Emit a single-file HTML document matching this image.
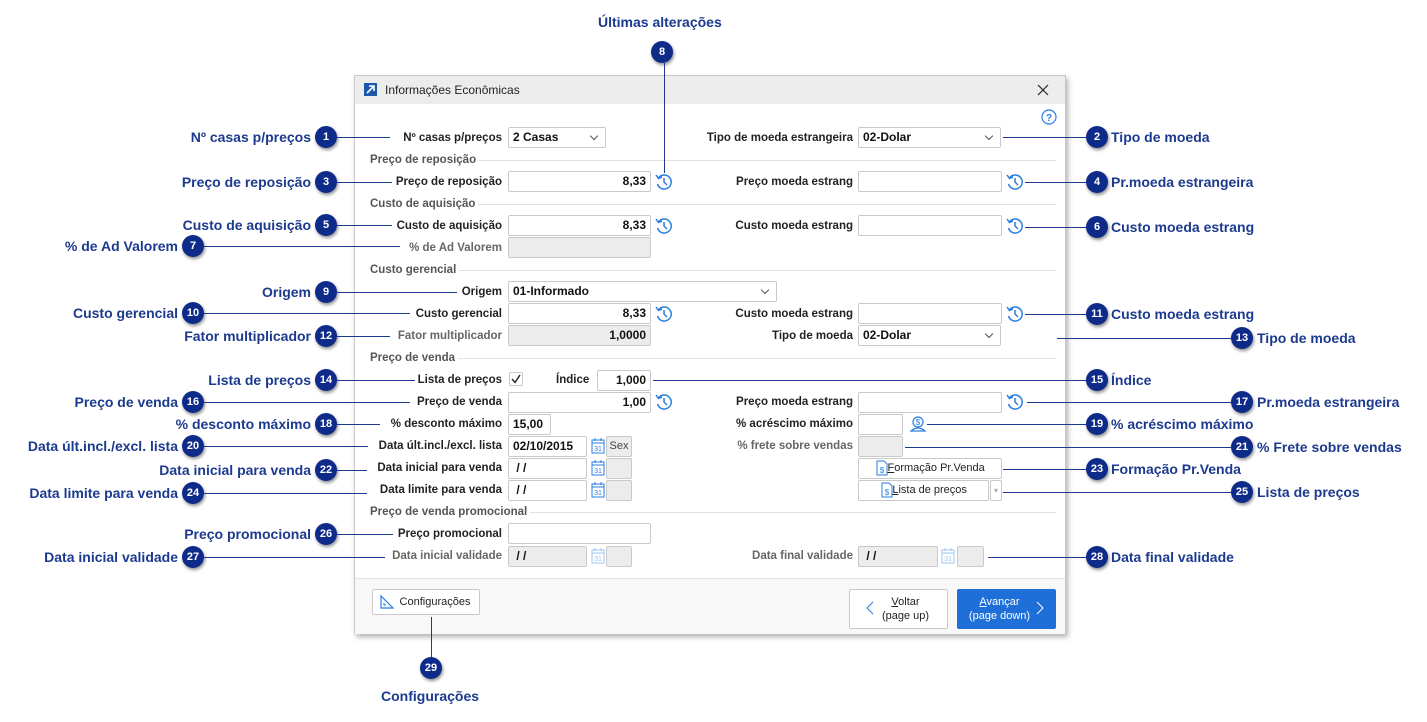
<!DOCTYPE html>
<html><head><meta charset="utf-8"><style>
*{box-sizing:border-box;margin:0;padding:0}
body{width:1427px;height:722px;background:#fff;position:relative;overflow:hidden;font-family:"Liberation Sans",sans-serif}
.a{position:absolute}
.cl{position:absolute;font-weight:bold;font-size:14px;color:#1c3a8e;white-space:nowrap;line-height:18px}
.b{position:absolute;width:22px;height:22px;border-radius:50%;background:#0f2b8a;color:#fff;font-size:11px;font-weight:bold;text-align:center;line-height:22px;box-shadow:1px 2px 3px rgba(0,0,0,.45)}
.h{position:absolute;height:1px;background:#1c3a8e}
.v{position:absolute;width:1px;background:#1c3a8e}
.dlg{position:absolute;left:354px;top:75px;width:712px;height:559px;background:#fff;border:1px solid #c8c8c8;box-shadow:2px 3px 5px rgba(0,0,0,.3)}
.lb{position:absolute;font-size:11.5px;font-weight:bold;color:#222;white-space:nowrap;line-height:14px;text-align:right}
.gr{color:#666}
.in{position:absolute;height:21px;border:1px solid #c9c9c9;border-radius:2px;background:#fff;font-size:12px;font-weight:bold;color:#111;line-height:19px;padding:0 4px;text-align:right}
.dis{background:#ececec}
.sel{text-align:left}
.sel:after{content:"";position:absolute;right:8px;top:5px;width:5px;height:5px;border-right:1px solid #555;border-bottom:1px solid #555;transform:rotate(45deg)}
.sec{position:absolute;left:16px;right:10px;font-size:11.5px;color:#444;line-height:14px;font-weight:bold}
.sec span{background:#fff;padding-right:3px;position:relative;z-index:1;color:#555}
.sec:before{content:"";position:absolute;left:0;right:0;top:7px;height:1px;background:#e2e2e2}
.btn{position:absolute;border:1px solid #c9c9c9;border-radius:2px;background:#fff;font-size:11px;color:#222;text-align:center}
</style></head><body>

<div class="dlg">
 <div class="a" style="left:0;top:0;width:710px;height:28px;background:#ececec"></div>
 <div class="a" style="left:9px;top:7px;width:13px;height:13px;background:#1c57a8"></div>
 <svg class="a" style="left:9px;top:7px" width="13" height="13"><path d="M3 10 L10 3 M5 3 H10 V8" stroke="#fff" stroke-width="1.6" fill="none"/></svg>
 <div class="a" style="left:30px;top:7px;font-size:12px;color:#222">Informações Econômicas</div>
 <svg class="a" style="left:682px;top:8px" width="12" height="12"><path d="M1 1 L11 11 M11 1 L1 11" stroke="#222" stroke-width="1.2"/></svg>
 <svg class="a" style="left:686px;top:33px" width="16" height="16"><circle cx="8" cy="8" r="7" stroke="#2a7de1" stroke-width="1.2" fill="none"/><text x="8" y="12" font-size="10" fill="#2a7de1" text-anchor="middle" font-family="Liberation Sans" font-weight="bold">?</text></svg>
 <div class="a" style="left:0;top:502px;width:710px;height:56px;background:#f8f8f8;border-top:1px solid #e2e2e2"></div>
</div>

<div class="lb" style="right:925px;top:131px">Nº casas p/preços</div>
<div class="in sel" style="left:508px;top:127px;width:98px">2 Casas</div>
<div class="lb" style="right:574px;top:131px">Tipo de moeda estrangeira</div>
<div class="in sel" style="left:858px;top:127px;width:143px">02-Dolar</div>

<div class="sec" style="left:370px;width:686px;top:153px"><span>Preço de reposição</span></div>
<div class="lb" style="right:925px;top:175px">Preço de reposição</div>
<div class="in" style="left:508px;top:171px;width:143px">8,33</div>
<div class="lb" style="right:574px;top:175px">Preço moeda estrang</div>
<div class="in" style="left:858px;top:171px;width:144px"></div>

<div class="sec" style="left:370px;width:686px;top:197px"><span>Custo de aquisição</span></div>
<div class="lb" style="right:925px;top:219px">Custo de aquisição</div>
<div class="in" style="left:508px;top:215px;width:143px">8,33</div>
<div class="lb" style="right:574px;top:219px">Custo moeda estrang</div>
<div class="in" style="left:858px;top:215px;width:144px"></div>
<div class="lb gr" style="right:925px;top:241px">% de Ad Valorem</div>
<div class="in dis" style="left:508px;top:237px;width:143px"></div>

<div class="sec" style="left:370px;width:686px;top:263px"><span>Custo gerencial</span></div>
<div class="lb" style="right:925px;top:285px">Origem</div>
<div class="in sel" style="left:508px;top:281px;width:269px">01-Informado</div>
<div class="lb" style="right:925px;top:307px">Custo gerencial</div>
<div class="in" style="left:508px;top:303px;width:143px">8,33</div>
<div class="lb" style="right:574px;top:307px">Custo moeda estrang</div>
<div class="in" style="left:858px;top:303px;width:144px"></div>
<div class="lb gr" style="right:925px;top:329px">Fator multiplicador</div>
<div class="in dis" style="left:508px;top:325px;width:143px">1,0000</div>
<div class="lb" style="right:574px;top:329px">Tipo de moeda</div>
<div class="in sel" style="left:858px;top:325px;width:143px">02-Dolar</div>

<div class="sec" style="left:370px;width:686px;top:351px"><span>Preço de venda</span></div>
<div class="lb" style="right:925px;top:373px">Lista de preços</div>
<div class="in" style="left:509px;top:372px;width:14px;height:14px;padding:0"></div>
<svg class="a" style="left:510px;top:373px" width="12" height="12"><path d="M2 6 L5 9.5 L10 2" stroke="#222" stroke-width="1.4" fill="none"/></svg>
<div class="lb" style="left:556px;top:373px">Índice</div>
<div class="in" style="left:597px;top:370px;width:54px">1,000</div>
<div class="lb" style="right:925px;top:395px">Preço de venda</div>
<div class="in" style="left:508px;top:392px;width:143px">1,00</div>
<div class="lb" style="right:574px;top:395px">Preço moeda estrang</div>
<div class="in" style="left:858px;top:392px;width:144px"></div>
<div class="lb" style="right:925px;top:417px">% desconto máximo</div>
<div class="in" style="left:508px;top:414px;width:43px;text-align:left">15,00</div>
<div class="lb" style="right:574px;top:417px">% acréscimo máximo</div>
<div class="in" style="left:858px;top:414px;width:45px"></div>
<svg class="a" style="left:908px;top:414px" width="20" height="20"><circle cx="10" cy="8" r="5" stroke="#2a7de1" fill="none" stroke-width="1.2"/><text x="10" y="11" font-size="8" fill="#2a7de1" text-anchor="middle" font-family="Liberation Sans">$</text><path d="M3 17 Q10 11 17 17 Z" stroke="#2a7de1" fill="none" stroke-width="1.2"/></svg>
<div class="lb" style="right:925px;top:439px">Data últ.incl./excl. lista</div>
<div class="in" style="left:508px;top:436px;width:79px;text-align:left">02/10/2015</div>
<div class="in dis" style="left:606px;top:436px;width:26px;font-weight:normal;color:#444;padding:0;text-align:center;font-size:11px">Sex</div>
<div class="lb gr" style="right:574px;top:439px">% frete sobre vendas</div>
<div class="in dis" style="left:858px;top:436px;width:45px"></div>
<div class="lb" style="right:925px;top:461px">Data inicial para venda</div>
<div class="in" style="left:508px;top:458px;width:79px;text-align:left">&nbsp;/ /</div>
<div class="in dis" style="left:606px;top:458px;width:26px"></div>
<div class="btn" style="left:858px;top:458px;width:144px;height:21px;line-height:19px">&nbsp;&nbsp;&nbsp;&nbsp;<u>F</u>ormação Pr.Venda</div>
<div class="lb" style="right:925px;top:483px">Data limite para venda</div>
<div class="in" style="left:508px;top:480px;width:79px;text-align:left">&nbsp;/ /</div>
<div class="in dis" style="left:606px;top:480px;width:26px"></div>
<div class="btn" style="left:858px;top:480px;width:131px;height:21px;line-height:19px">&nbsp;&nbsp;&nbsp;&nbsp;<u>L</u>ista de preços</div>
<div class="btn" style="left:990px;top:480px;width:12px;height:21px;line-height:19px;color:#aaa;font-size:8px">▾</div>
<svg class="a" style="left:876px;top:460px" width="12" height="16"><path d="M1 1 H8 L11 4 V15 H1 Z" stroke="#2a7de1" fill="none"/><text x="6" y="13" font-size="8" fill="#2a7de1" text-anchor="middle">$</text></svg>
<svg class="a" style="left:881px;top:482px" width="12" height="16"><path d="M1 1 H8 L11 4 V15 H1 Z" stroke="#2a7de1" fill="none"/><text x="6" y="13" font-size="8" fill="#2a7de1" text-anchor="middle">$</text></svg>

<div class="sec" style="left:370px;width:686px;top:505px"><span>Preço de venda promocional</span></div>
<div class="lb" style="right:925px;top:527px">Preço promocional</div>
<div class="in" style="left:508px;top:523px;width:143px"></div>
<div class="lb gr" style="right:925px;top:549px">Data inicial validade</div>
<div class="in dis" style="left:508px;top:546px;width:79px;text-align:left">&nbsp;/ /</div>
<div class="in dis" style="left:606px;top:546px;width:26px"></div>
<div class="lb gr" style="right:574px;top:549px">Data final validade</div>
<div class="in dis" style="left:858px;top:546px;width:80px;text-align:left">&nbsp;/ /</div>
<div class="in dis" style="left:957px;top:546px;width:27px"></div>

<svg class="a" style="left:591px;top:437px" width="14" height="17"><rect x="1" y="3" width="12" height="13" stroke="#2a7de1" fill="none"/><path d="M1 6 H13 M4 1 V4 M10 1 V4" stroke="#2a7de1"/><text x="7" y="14" font-size="7" fill="#2a7de1" text-anchor="middle">31</text></svg>
<svg class="a" style="left:591px;top:459px" width="14" height="17"><rect x="1" y="3" width="12" height="13" stroke="#2a7de1" fill="none"/><path d="M1 6 H13 M4 1 V4 M10 1 V4" stroke="#2a7de1"/><text x="7" y="14" font-size="7" fill="#2a7de1" text-anchor="middle">31</text></svg>
<svg class="a" style="left:591px;top:481px" width="14" height="17"><rect x="1" y="3" width="12" height="13" stroke="#2a7de1" fill="none"/><path d="M1 6 H13 M4 1 V4 M10 1 V4" stroke="#2a7de1"/><text x="7" y="14" font-size="7" fill="#2a7de1" text-anchor="middle">31</text></svg>
<svg class="a" style="left:591px;top:547px" width="14" height="17" opacity=".45"><rect x="1" y="3" width="12" height="13" stroke="#2a7de1" fill="none"/><path d="M1 6 H13 M4 1 V4 M10 1 V4" stroke="#2a7de1"/><text x="7" y="14" font-size="7" fill="#2a7de1" text-anchor="middle">31</text></svg>
<svg class="a" style="left:941px;top:547px" width="14" height="17" opacity=".45"><rect x="1" y="3" width="12" height="13" stroke="#2a7de1" fill="none"/><path d="M1 6 H13 M4 1 V4 M10 1 V4" stroke="#2a7de1"/><text x="7" y="14" font-size="7" fill="#2a7de1" text-anchor="middle">31</text></svg>

<svg class="a" style="left:655px;top:173px" width="18" height="18"><path d="M3.5 5 A7 7 0 1 1 2.5 11" stroke="#2a7de1" stroke-width="1.5" fill="none"/><path d="M1 2 L3.5 5.5 L7 4" stroke="#2a7de1" stroke-width="1.5" fill="none"/><path d="M9 5 V9 L12 12" stroke="#2a7de1" stroke-width="1.5" fill="none"/></svg>
<svg class="a" style="left:655px;top:217px" width="18" height="18"><path d="M3.5 5 A7 7 0 1 1 2.5 11" stroke="#2a7de1" stroke-width="1.5" fill="none"/><path d="M1 2 L3.5 5.5 L7 4" stroke="#2a7de1" stroke-width="1.5" fill="none"/><path d="M9 5 V9 L12 12" stroke="#2a7de1" stroke-width="1.5" fill="none"/></svg>
<svg class="a" style="left:655px;top:305px" width="18" height="18"><path d="M3.5 5 A7 7 0 1 1 2.5 11" stroke="#2a7de1" stroke-width="1.5" fill="none"/><path d="M1 2 L3.5 5.5 L7 4" stroke="#2a7de1" stroke-width="1.5" fill="none"/><path d="M9 5 V9 L12 12" stroke="#2a7de1" stroke-width="1.5" fill="none"/></svg>
<svg class="a" style="left:655px;top:393px" width="18" height="18"><path d="M3.5 5 A7 7 0 1 1 2.5 11" stroke="#2a7de1" stroke-width="1.5" fill="none"/><path d="M1 2 L3.5 5.5 L7 4" stroke="#2a7de1" stroke-width="1.5" fill="none"/><path d="M9 5 V9 L12 12" stroke="#2a7de1" stroke-width="1.5" fill="none"/></svg>
<svg class="a" style="left:1006px;top:173px" width="18" height="18"><path d="M3.5 5 A7 7 0 1 1 2.5 11" stroke="#2a7de1" stroke-width="1.5" fill="none"/><path d="M1 2 L3.5 5.5 L7 4" stroke="#2a7de1" stroke-width="1.5" fill="none"/><path d="M9 5 V9 L12 12" stroke="#2a7de1" stroke-width="1.5" fill="none"/></svg>
<svg class="a" style="left:1006px;top:217px" width="18" height="18"><path d="M3.5 5 A7 7 0 1 1 2.5 11" stroke="#2a7de1" stroke-width="1.5" fill="none"/><path d="M1 2 L3.5 5.5 L7 4" stroke="#2a7de1" stroke-width="1.5" fill="none"/><path d="M9 5 V9 L12 12" stroke="#2a7de1" stroke-width="1.5" fill="none"/></svg>
<svg class="a" style="left:1006px;top:305px" width="18" height="18"><path d="M3.5 5 A7 7 0 1 1 2.5 11" stroke="#2a7de1" stroke-width="1.5" fill="none"/><path d="M1 2 L3.5 5.5 L7 4" stroke="#2a7de1" stroke-width="1.5" fill="none"/><path d="M9 5 V9 L12 12" stroke="#2a7de1" stroke-width="1.5" fill="none"/></svg>
<svg class="a" style="left:1006px;top:393px" width="18" height="18"><path d="M3.5 5 A7 7 0 1 1 2.5 11" stroke="#2a7de1" stroke-width="1.5" fill="none"/><path d="M1 2 L3.5 5.5 L7 4" stroke="#2a7de1" stroke-width="1.5" fill="none"/><path d="M9 5 V9 L12 12" stroke="#2a7de1" stroke-width="1.5" fill="none"/></svg>

<div class="btn" style="left:372px;top:589px;width:108px;height:26px;line-height:24px;padding-left:18px">Configurações</div>
<svg class="a" style="left:379px;top:594px" width="16" height="16"><path d="M2 2 V14 H14 Z" stroke="#2a7de1" fill="none" stroke-width="1.2"/><path d="M5 9 V11 H7" stroke="#2a7de1" fill="none"/></svg>
<div class="btn" style="left:849px;top:589px;width:99px;height:40px;padding-left:14px;line-height:14px;padding-top:5px"><u>V</u>oltar<br>(page up)</div>
<svg class="a" style="left:866px;top:601px" width="8" height="14"><path d="M7 1 L1 7 L7 13" stroke="#2a7de1" fill="none"/></svg>
<div class="btn" style="left:957px;top:589px;width:99px;height:40px;background:#1f6fd8;border-color:#1f6fd8;color:#fff;padding-right:14px;line-height:14px;padding-top:5px"><u>A</u>vançar<br>(page down)</div>
<svg class="a" style="left:1036px;top:601px" width="8" height="14"><path d="M1 1 L7 7 L1 13" stroke="#fff" fill="none"/></svg>

<div class="cl" style="right:1116px;top:128px">Nº casas p/preços</div><div class="b" style="left:315px;top:126px">1</div><div class="h" style="left:337px;width:53px;top:137px"></div>
<div class="cl" style="right:1116px;top:173px">Preço de reposição</div><div class="b" style="left:315px;top:171px">3</div><div class="h" style="left:337px;width:55px;top:182px"></div>
<div class="cl" style="right:1116px;top:216px">Custo de aquisição</div><div class="b" style="left:315px;top:214px">5</div><div class="h" style="left:337px;width:55px;top:225px"></div>
<div class="cl" style="right:1249px;top:237px">% de Ad Valorem</div><div class="b" style="left:182px;top:235px">7</div><div class="h" style="left:204px;width:196px;top:246px"></div>
<div class="cl" style="right:1116px;top:283px">Origem</div><div class="b" style="left:315px;top:281px">9</div><div class="h" style="left:337px;width:120px;top:292px"></div>
<div class="cl" style="right:1249px;top:304px">Custo gerencial</div><div class="b" style="left:182px;top:302px">10</div><div class="h" style="left:204px;width:206px;top:313px"></div>
<div class="cl" style="right:1116px;top:327px">Fator multiplicador</div><div class="b" style="left:315px;top:325px">12</div><div class="h" style="left:337px;width:53px;top:336px"></div>
<div class="cl" style="right:1116px;top:371px">Lista de preços</div><div class="b" style="left:315px;top:369px">14</div><div class="h" style="left:337px;width:78px;top:380px"></div>
<div class="cl" style="right:1249px;top:393px">Preço de venda</div><div class="b" style="left:182px;top:391px">16</div><div class="h" style="left:204px;width:206px;top:402px"></div>
<div class="cl" style="right:1116px;top:415px">% desconto máximo</div><div class="b" style="left:315px;top:413px">18</div><div class="h" style="left:337px;width:43px;top:424px"></div>
<div class="cl" style="right:1249px;top:437px">Data últ.incl./excl. lista</div><div class="b" style="left:182px;top:435px">20</div><div class="h" style="left:204px;width:164px;top:446px"></div>
<div class="cl" style="right:1116px;top:461px">Data inicial para venda</div><div class="b" style="left:315px;top:459px">22</div><div class="h" style="left:337px;width:30px;top:470px"></div>
<div class="cl" style="right:1249px;top:484px">Data limite para venda</div><div class="b" style="left:182px;top:482px">24</div><div class="h" style="left:204px;width:163px;top:493px"></div>
<div class="cl" style="right:1116px;top:525px">Preço promocional</div><div class="b" style="left:315px;top:523px">26</div><div class="h" style="left:337px;width:56px;top:534px"></div>
<div class="cl" style="right:1249px;top:548px">Data inicial validade</div><div class="b" style="left:182px;top:546px">27</div><div class="h" style="left:204px;width:181px;top:557px"></div>

<div class="v" style="left:431px;top:617px;height:41px"></div><div class="b" style="left:420px;top:657px">29</div>
<div class="cl" style="left:381px;top:687px">Configurações</div>
<div class="cl" style="left:598px;top:13px">Últimas alterações</div>
<div class="b" style="left:651px;top:41px">8</div><div class="v" style="left:664px;top:63px;height:110px"></div>

<div class="h" style="left:1003px;width:83px;top:137px"></div><div class="b" style="left:1086px;top:126px">2</div><div class="cl" style="left:1111px;top:128px">Tipo de moeda</div>
<div class="h" style="left:1025px;width:61px;top:182px"></div><div class="b" style="left:1086px;top:171px">4</div><div class="cl" style="left:1111px;top:173px">Pr.moeda estrangeira</div>
<div class="h" style="left:1025px;width:61px;top:227px"></div><div class="b" style="left:1086px;top:216px">6</div><div class="cl" style="left:1111px;top:218px">Custo moeda estrang</div>
<div class="h" style="left:1025px;width:61px;top:314px"></div><div class="b" style="left:1086px;top:303px">11</div><div class="cl" style="left:1111px;top:305px">Custo moeda estrang</div>
<div class="h" style="left:1057px;width:174px;top:338px"></div><div class="b" style="left:1231px;top:327px">13</div><div class="cl" style="left:1257px;top:329px">Tipo de moeda</div>
<div class="h" style="left:653px;width:433px;top:380px"></div><div class="b" style="left:1086px;top:369px">15</div><div class="cl" style="left:1111px;top:371px">Índice</div>
<div class="h" style="left:1027px;width:204px;top:402px"></div><div class="b" style="left:1231px;top:391px">17</div><div class="cl" style="left:1257px;top:393px">Pr.moeda estrangeira</div>
<div class="h" style="left:927px;width:159px;top:424px"></div><div class="b" style="left:1086px;top:413px">19</div><div class="cl" style="left:1111px;top:415px">% acréscimo máximo</div>
<div class="h" style="left:905px;width:326px;top:447px"></div><div class="b" style="left:1231px;top:436px">21</div><div class="cl" style="left:1257px;top:438px">% Frete sobre vendas</div>
<div class="h" style="left:1003px;width:83px;top:469px"></div><div class="b" style="left:1086px;top:458px">23</div><div class="cl" style="left:1111px;top:460px">Formação Pr.Venda</div>
<div class="h" style="left:1003px;width:228px;top:492px"></div><div class="b" style="left:1231px;top:481px">25</div><div class="cl" style="left:1257px;top:483px">Lista de preços</div>
<div class="h" style="left:988px;width:98px;top:557px"></div><div class="b" style="left:1086px;top:546px">28</div><div class="cl" style="left:1111px;top:548px">Data final validade</div>
</body></html>
